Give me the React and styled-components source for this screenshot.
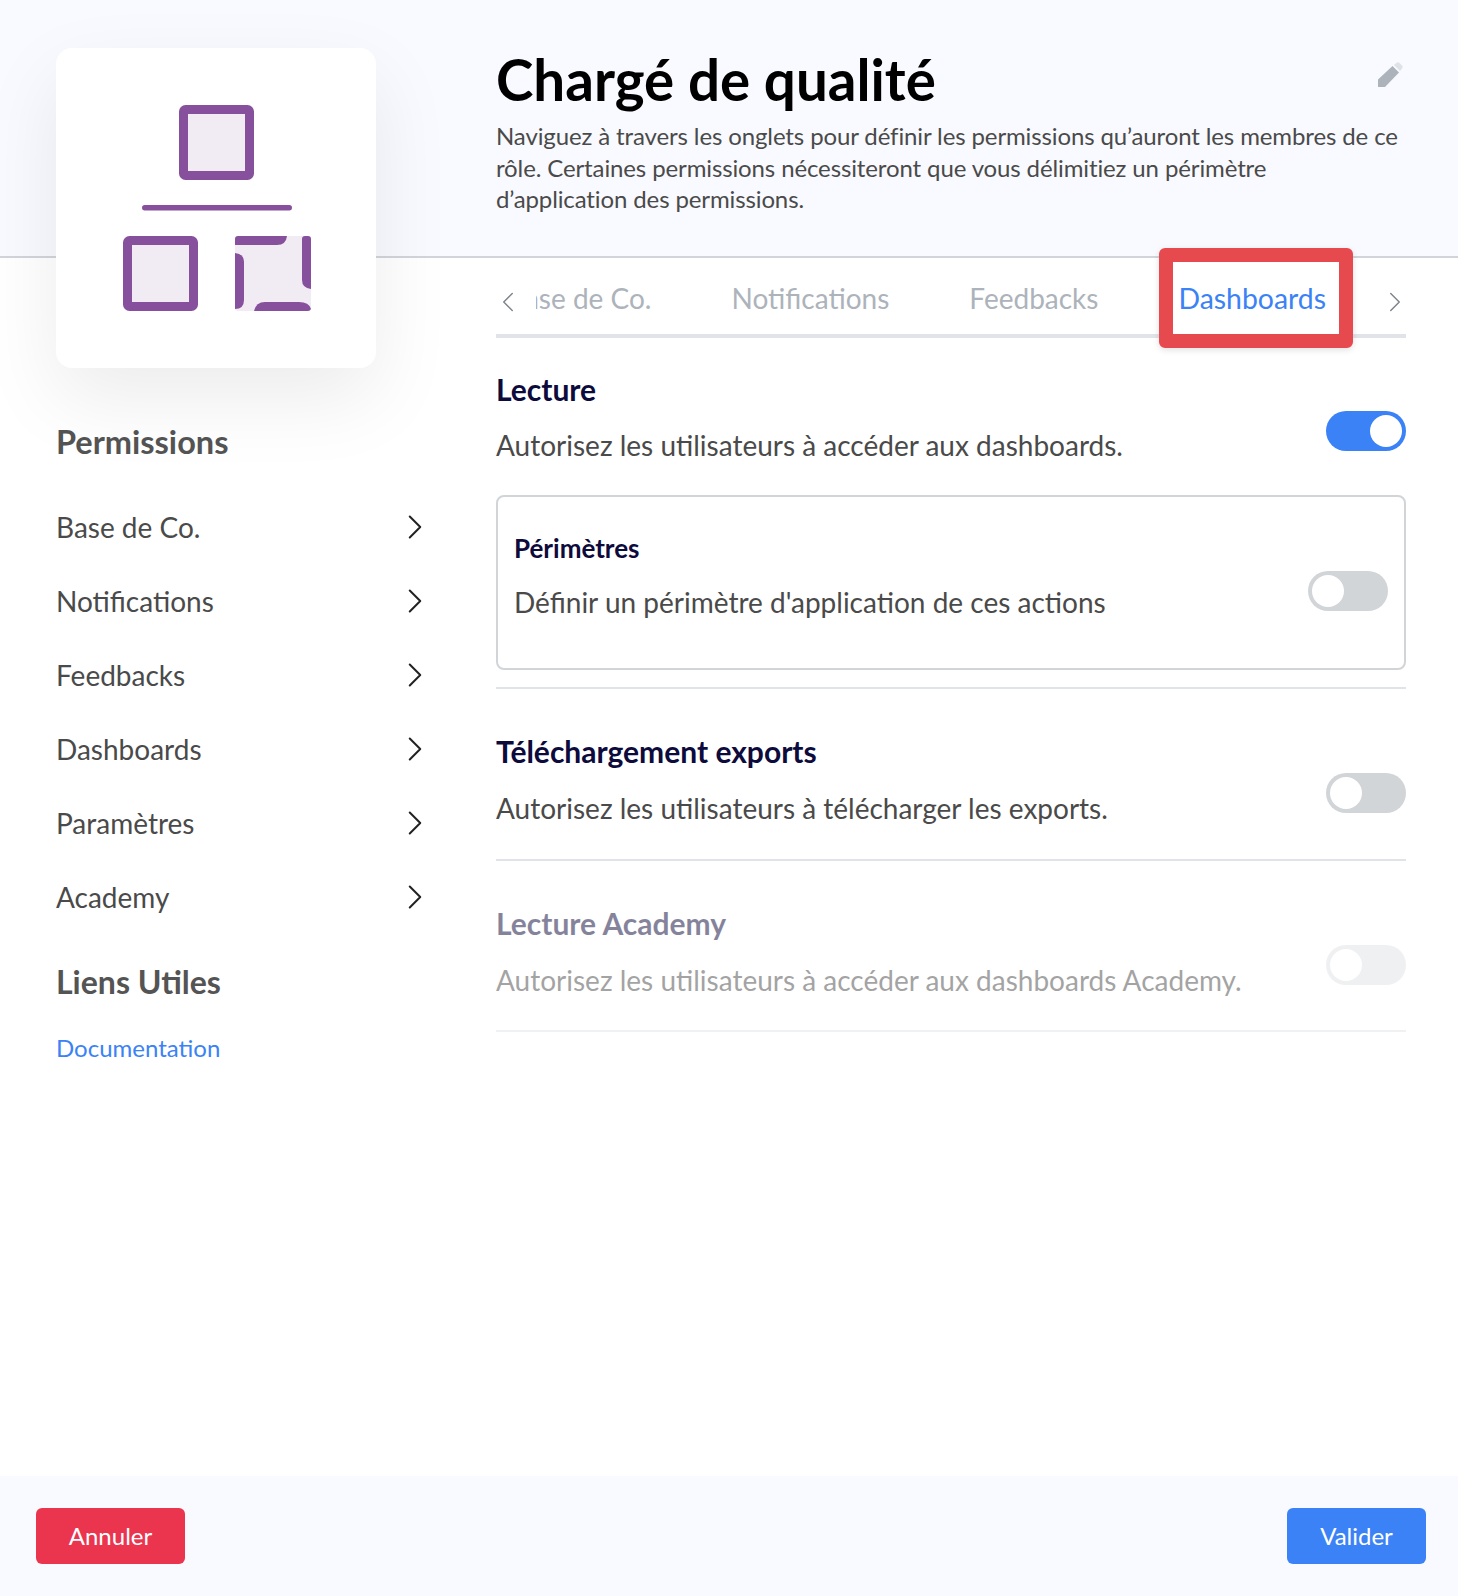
import React from "react";
import styled, { createGlobalStyle } from "styled-components";
import { ChevronRight, ChevronLeft } from "lucide-react";

const Global = createGlobalStyle`
  html, body { margin: 0; padding: 0; background: #fff; }
  body { font-family: Lato, "Liberation Sans", sans-serif; }
  * { box-sizing: border-box; }
`;

const Page = styled.div`
  width: 1458px;
  min-height: 1596px;
  display: flex;
  flex-direction: column;
  background: #fff;
`;

const Header = styled.header`
  height: 258px;
  flex: none;
  display: flex;
  background: #f9faff;
  border-bottom: 2px solid #d1d5db;
`;

const LogoColumn = styled.div`
  width: 496px;
  flex: none;
  padding: 48px 0 0 56px;
`;

const LogoCard = styled.div`
  position: relative;
  z-index: 2;
  width: 320px;
  height: 320px;
  padding-left: 2px;
  border-radius: 16px;
  background: #fff;
  display: flex;
  align-items: center;
  justify-content: center;
  box-shadow: 0 30px 80px rgba(0, 0, 0, 0.08);
`;

const HeaderText = styled.div`
  position: relative;
  width: 910px;
  padding-top: 43px;
`;

const Title = styled.h1`
  margin: 0 0 5px;
  font-size: 56.5px;
  line-height: 72px;
  font-weight: 700;
  color: #000;
`;

const Intro = styled.p`
  margin: 0;
  font-size: 24px;
  line-height: 31.5px;
  letter-spacing: -0.12px;
  color: #4a4a4a;
`;

const EditIcon = styled.svg`
  position: absolute;
  top: 62px;
  right: 3px;
`;

const Body = styled.div`
  flex: 1;
  display: flex;
`;

const Sidebar = styled.aside`
  width: 496px;
  flex: none;
  padding: 162px 60px 0 56px;
`;

const SideTitle = styled.h2`
  margin: 0;
  font-size: ${(p) => p.$size || "32.5px"};
  line-height: 44px;
  font-weight: 700;
  color: #545454;
`;

const SideList = styled.ul`
  list-style: none;
  margin: 26px 0 26px;
  padding: 0;
`;

const SideItem = styled.li`
  height: 74px;
  display: flex;
  align-items: center;
  justify-content: space-between;
  font-size: 28px;
  color: #4a4a4a;
`;

const DocLink = styled.a`
  display: block;
  margin-top: 28px;
  font-size: 24px;
  line-height: 32px;
  color: #3b82f6;
`;

const Main = styled.main`
  width: 910px;
`;

const Tabs = styled.nav`
  position: relative;
  height: 80px;
  display: flex;
  border-bottom: 4px solid #e0e3e7;
`;

const TabArrow = styled.div`
  width: 40px;
  flex: none;
  padding-top: 12px;
  display: flex;
  align-items: center;
  justify-content: ${(p) => (p.$side === "left" ? "flex-start" : "flex-end")};
  color: #7d838c;
  svg {
    flex: none;
    margin: 0 -5.5px;
  }
`;

const TabViewport = styled.div`
  flex: 1;
  min-width: 0;
  display: flex;
  justify-content: flex-end;
  overflow: hidden;
`;

const Tab = styled.div`
  position: relative;
  flex: none;
  padding: 5px 40px 0;
  line-height: 71px;
  font-size: ${(p) => (p.$active ? "28.4px" : "28px")};
  white-space: nowrap;
  color: ${(p) => (p.$active ? "#3b82f6" : "#adb3bb")};
`;

// the red frame is an annotation lying over the active tab
const Highlight = styled.div`
  position: absolute;
  top: -10px;
  right: 53px;
  width: 194px;
  height: 100px;
  border: 14px solid #e64a4f;
  border-radius: 6px;
  box-shadow: 0 2px 6px rgba(0, 0, 0, 0.12);
`;

const Section = styled.section`
  display: flex;
  align-items: flex-start;
  justify-content: space-between;
  padding: ${(p) => (p.$first ? "31px" : "42px")} 0 ${(p) => p.$bottom || "30.5px"};
  border-bottom: ${(p) => (p.$plain ? "none" : "2px solid #e0e3e7")};
  opacity: ${(p) => (p.$disabled ? 0.5 : 1)};
`;

const SectionTitle = styled.h3`
  margin: 0 0 ${(p) => p.$gap || "17px"};
  font-size: 30px;
  line-height: 40px;
  font-weight: 700;
  color: #0d0a3c;
`;

const SectionText = styled.p`
  margin: 0;
  font-size: 28px;
  line-height: 40px;
  color: #4a4a4a;
`;

const Toggle = styled.div`
  width: 80px;
  height: 40px;
  flex: none;
  margin-top: ${(p) => p.$top || "42px"};
  padding: 4px;
  border-radius: 20px;
  display: flex;
  justify-content: ${(p) => (p.$on ? "flex-end" : "flex-start")};
  background: ${(p) => (p.$on ? "#3b82f6" : p.$muted ? "#e1e3e7" : "#d1d5d8")};
  &::after {
    content: "";
    width: 32px;
    height: 32px;
    border-radius: 50%;
    background: #fff;
  }
`;

const PerimeterWrap = styled.div`
  padding-bottom: 17px;
  border-bottom: 2px solid #e0e3e7;
`;

const PerimeterBox = styled.div`
  height: 175px;
  padding: 33px 16px 0;
  display: flex;
  align-items: flex-start;
  justify-content: space-between;
  border: 2px solid #d1d5d8;
  border-radius: 8px;
`;

const BoxTitle = styled.h4`
  margin: 0 0 16px;
  font-size: 26px;
  line-height: 36px;
  font-weight: 700;
  color: #0d0a3c;
`;

const Footer = styled.footer`
  height: 120px;
  flex: none;
  display: flex;
  align-items: flex-start;
  justify-content: space-between;
  padding: 32px 32px 0 36px;
  background: #f9faff;
`;

const Button = styled.button`
  height: 56px;
  width: ${(p) => p.$width};
  padding: 0 0 2px;
  border: none;
  border-radius: 6px;
  font-family: inherit;
  font-size: 24px;
  color: #fff;
  background: ${(p) => p.$bg};
`;

const MENU = ["Base de Co.", "Notifications", "Feedbacks", "Dashboards", "Paramètres", "Academy"];
const PURPLE = "#87509c";
const TINT = "#f1ecf4";

function RoleIcon() {
  return (
    <svg width="188" height="206" viewBox="0 0 188 206">
      <rect x="60.5" y="4.5" width="66" height="66" rx="2" fill={TINT} stroke={PURPLE} strokeWidth="9" />
      <rect x="19" y="100" width="150" height="5.5" rx="2.75" fill={PURPLE} />
      <rect x="4.5" y="135.5" width="66" height="66" rx="2" fill={TINT} stroke={PURPLE} strokeWidth="9" />
      <rect x="112" y="131" width="76" height="75" rx="3" fill={TINT} />
      <path d="M115 131H164Q163 140 154 140H112V134Q112 131 115 131Z" fill={PURPLE} />
      <path d="M179 134Q179 131 182 131H185Q188 131 188 134V184Q179 183 179 175Z" fill={PURPLE} />
      <path d="M131 206Q133 197 142 197H176Q186 197 188 204Q187 206 185 206Z" fill={PURPLE} />
      <path d="M112 148Q121 149 121 157V195Q121 204 112 204Z" fill={PURPLE} />
    </svg>
  );
}

export default function App() {
  return (
    <Page>
      <Global />
      <Header>
        <LogoColumn>
          <LogoCard>
            <RoleIcon />
          </LogoCard>
        </LogoColumn>
        <HeaderText>
          <Title>Chargé de qualité</Title>
          <Intro>
            Naviguez à travers les onglets pour définir les permissions qu’auront les membres de ce
            <br />
            rôle. Certaines permissions nécessiteront que vous délimitiez un périmètre
            <br />
            d’application des permissions.
          </Intro>
          <EditIcon width="26" height="26" viewBox="0 0 26 26">
            <path d="M1 25V17.5L15.5 4L22 10.5L8 25Z" fill="#adb3bb" />
            <path d="M17 3L20 .6Q21 0 22 .6L25.4 4Q26 5 25.4 6L23 9Z" fill="#dfe2e7" />
          </EditIcon>
        </HeaderText>
      </Header>
      <Body>
        <Sidebar>
          <SideTitle>Permissions</SideTitle>
          <SideList>
            {MENU.map((m) => (
              <SideItem key={m}>
                {m}
                <ChevronRight size={42} strokeWidth={1.15} color="#222" />
              </SideItem>
            ))}
          </SideList>
          <SideTitle $size="32px">Liens Utiles</SideTitle>
          <DocLink>Documentation</DocLink>
        </Sidebar>
        <Main>
          <Tabs>
            <TabArrow $side="left">
              <ChevronLeft size={34} strokeWidth={1} />
            </TabArrow>
            <TabViewport>
              <Tab>Base de Co.</Tab>
              <Tab>Notifications</Tab>
              <Tab>Feedbacks</Tab>
              <Tab $active>Dashboards</Tab>
            </TabViewport>
            <TabArrow $side="right">
              <ChevronRight size={34} strokeWidth={1} />
            </TabArrow>
            <Highlight />
          </Tabs>
          <Section $first $plain $bottom="30px">
            <div>
              <SectionTitle $gap="16px">Lecture</SectionTitle>
              <SectionText>Autorisez les utilisateurs à accéder aux dashboards.</SectionText>
            </div>
            <Toggle $on />
          </Section>
          <PerimeterWrap>
            <PerimeterBox>
              <div>
                <BoxTitle>Périmètres</BoxTitle>
                <SectionText>Définir un périmètre d'application de ces actions</SectionText>
              </div>
              <Toggle $top="41px" />
            </PerimeterBox>
          </PerimeterWrap>
          <Section>
            <div>
              <SectionTitle>Téléchargement exports</SectionTitle>
              <SectionText>Autorisez les utilisateurs à télécharger les exports.</SectionText>
            </div>
            <Toggle />
          </Section>
          <Section $disabled>
            <div>
              <SectionTitle>Lecture Academy</SectionTitle>
              <SectionText>Autorisez les utilisateurs à accéder aux dashboards Academy.</SectionText>
            </div>
            <Toggle $muted />
          </Section>
        </Main>
      </Body>
      <Footer>
        <Button $bg="#eb344e" $width="149px">Annuler</Button>
        <Button $bg="#3b82f6" $width="139px">Valider</Button>
      </Footer>
    </Page>
  );
}
